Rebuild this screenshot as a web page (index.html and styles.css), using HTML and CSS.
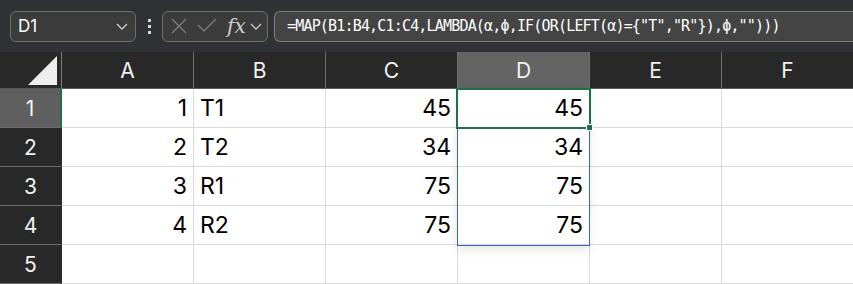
FILE: index.html
```html
<!DOCTYPE html>
<html>
<head>
    <meta charset="UTF-8">
    <title>Sheet</title>
    <link rel="stylesheet" href="styles.css">
</head>
<body>

    <div class="toolbar">
        <div class="namebox">
            <span>D1</span>
            <svg class="chev" width="14" height="10" viewBox="0 0 14 10"><path d="M2 3 L7 8 L12 3" fill="none" stroke="#d0d0d0" stroke-width="1.3"/></svg>
        </div>
        <div class="dots"><i></i><i></i><i></i></div>
        <div class="fxbox">
            <svg width="20" height="20" viewBox="0 0 20 20"><path d="M3 3 L17 17 M17 3 L3 17" stroke="#7c7c7c" stroke-width="1.4"/></svg>
            <svg width="22" height="20" viewBox="0 0 22 20"><path d="M2 9 L8 15 L20 3" fill="none" stroke="#7c7c7c" stroke-width="1.4"/></svg>
            <span class="fx">fx</span>
            <svg width="14" height="10" viewBox="0 0 14 10"><path d="M2 3 L7 8 L12 3" fill="none" stroke="#c8c8c8" stroke-width="1.3"/></svg>
        </div>
        <div class="formula">=MAP(B1:B4,C1:C4,LAMBDA(α,ϕ,IF(OR(LEFT(α)={"T","R"}),ϕ,"")))</div>
    </div>

    <div class="grid">
        <div class="corner"><div class="tri"></div></div>
        <div class="colhead">A</div>
        <div class="colhead">B</div>
        <div class="colhead">C</div>
        <div class="colhead active">D</div>
        <div class="colhead">E</div>
        <div class="colhead">F</div>

        <div class="rowhead active">1</div>
        <div class="cell num">1</div>
        <div class="cell">T1</div>
        <div class="cell num">45</div>
        <div class="cell num">45</div>
        <div class="cell"></div>
        <div class="cell"></div>

        <div class="rowhead">2</div>
        <div class="cell num">2</div>
        <div class="cell">T2</div>
        <div class="cell num">34</div>
        <div class="cell num">34</div>
        <div class="cell"></div>
        <div class="cell"></div>

        <div class="rowhead">3</div>
        <div class="cell num">3</div>
        <div class="cell">R1</div>
        <div class="cell num">75</div>
        <div class="cell num">75</div>
        <div class="cell"></div>
        <div class="cell"></div>

        <div class="rowhead">4</div>
        <div class="cell num">4</div>
        <div class="cell">R2</div>
        <div class="cell num">75</div>
        <div class="cell num">75</div>
        <div class="cell"></div>
        <div class="cell"></div>

        <div class="rowhead">5</div>
        <div class="cell"></div>
        <div class="cell"></div>
        <div class="cell"></div>
        <div class="cell"></div>
        <div class="cell"></div>
        <div class="cell"></div>

        <!-- spill range and active cell -->
        <div class="spill"></div>
        <div class="activecell"><div class="handle"></div></div>
    </div>

</body>
</html>
```

FILE: styles.css
```css
body {
    margin: 0;
    width: 853px;
    height: 284px;
    overflow: hidden;
    background: #ffffff;
    font-family: Inter, "Liberation Sans", sans-serif;
}

.toolbar {
    height: 52px;
    background: #303235;
    display: flex;
    align-items: center;
    padding-left: 10px;
    box-sizing: border-box;
}

.namebox {
    width: 126px;
    height: 31px;
    box-sizing: border-box;
    border: 1px solid #6e6e6e;
    border-radius: 6px;
    background: #3c3c3c;
    display: flex;
    align-items: center;
    justify-content: space-between;
    padding: 0 6px 0 7px;
    color: #ffffff;
    font-size: 17px;
}

.dots {
    width: 26px;
    display: flex;
    flex-direction: column;
    align-items: center;
    gap: 3px;
}

.dots i {
    display: block;
    width: 3px;
    height: 3px;
    background: #d8d8d8;
}

.fxbox {
    width: 106px;
    height: 31px;
    box-sizing: border-box;
    border: 1px solid #6e6e6e;
    border-radius: 6px;
    background: #3c3c3c;
    display: flex;
    align-items: center;
    gap: 7px;
    padding-left: 6px;
}

.fx {
    font-family: "DejaVu Serif", "Liberation Serif", serif;
    font-style: italic;
    font-size: 20px;
    color: #cfcfcf;
    margin-left: 2px;
    margin-right: -4px;
}

.formula {
    flex: 1;
    margin-left: 6px;
    height: 31px;
    box-sizing: border-box;
    border: 1px solid #7e7e7e;
    border-right: none;
    border-radius: 6px 0 0 6px;
    background: #444444;
    color: #ffffff;
    font-family: "DejaVu Sans Mono", "Liberation Mono", monospace;
    font-size: 15px;
    letter-spacing: -0.82px;
    line-height: 29px;
    padding-left: 12px;
    white-space: nowrap;
}

.grid {
    position: relative;
    display: grid;
    grid-template-columns: 62px repeat(6, 132px);
    grid-template-rows: 37px repeat(5, 39px);
}

.corner, .colhead, .rowhead {
    background: #292929;
    color: #f2f2f2;
    font-size: 21px;
    display: flex;
    align-items: center;
    justify-content: center;
    box-sizing: border-box;
}

.corner {
    border-right: 1px solid #7a7a7a;
    border-bottom: 1px solid #5a5a5a;
    position: relative;
}

.tri {
    position: absolute;
    right: 4px;
    bottom: 3px;
    width: 0;
    height: 0;
    border-left: 29px solid transparent;
    border-bottom: 29px solid #eeeeee;
}

.colhead {
    border-right: 1px solid #6f6f6f;
    border-bottom: 1px solid #5a5a5a;
}

.colhead.active {
    background: #646464;
}

.rowhead {
    border-bottom: 1px solid #6a6a6a;
    border-right: 1px solid #292929;
}

.rowhead.active {
    background: #5f5f5f;
    border-right: 2px solid #1e7145;
}

.cell {
    box-sizing: border-box;
    border-right: 1px solid #dadada;
    border-bottom: 1px solid #dadada;
    font-size: 23px;
    color: #000000;
    display: flex;
    align-items: center;
    padding: 0 6px;
}

.num {
    justify-content: flex-end;
}

.spill {
    position: absolute;
    left: 457px;
    top: 37px;
    width: 133px;
    height: 157px;
    box-shadow: 0 4px 10px rgba(0, 0, 0, 0.10), inset 0 0 0 1px #3366cc;
}

.activecell {
    position: absolute;
    left: 456px;
    top: 36px;
    width: 135px;
    height: 41px;
    box-sizing: border-box;
    border: 2px solid #1e7145;
}

.handle {
    position: absolute;
    right: -4px;
    bottom: -4px;
    width: 5px;
    height: 5px;
    background: #1e7145;
    border: 1px solid #ffffff;
}
```
